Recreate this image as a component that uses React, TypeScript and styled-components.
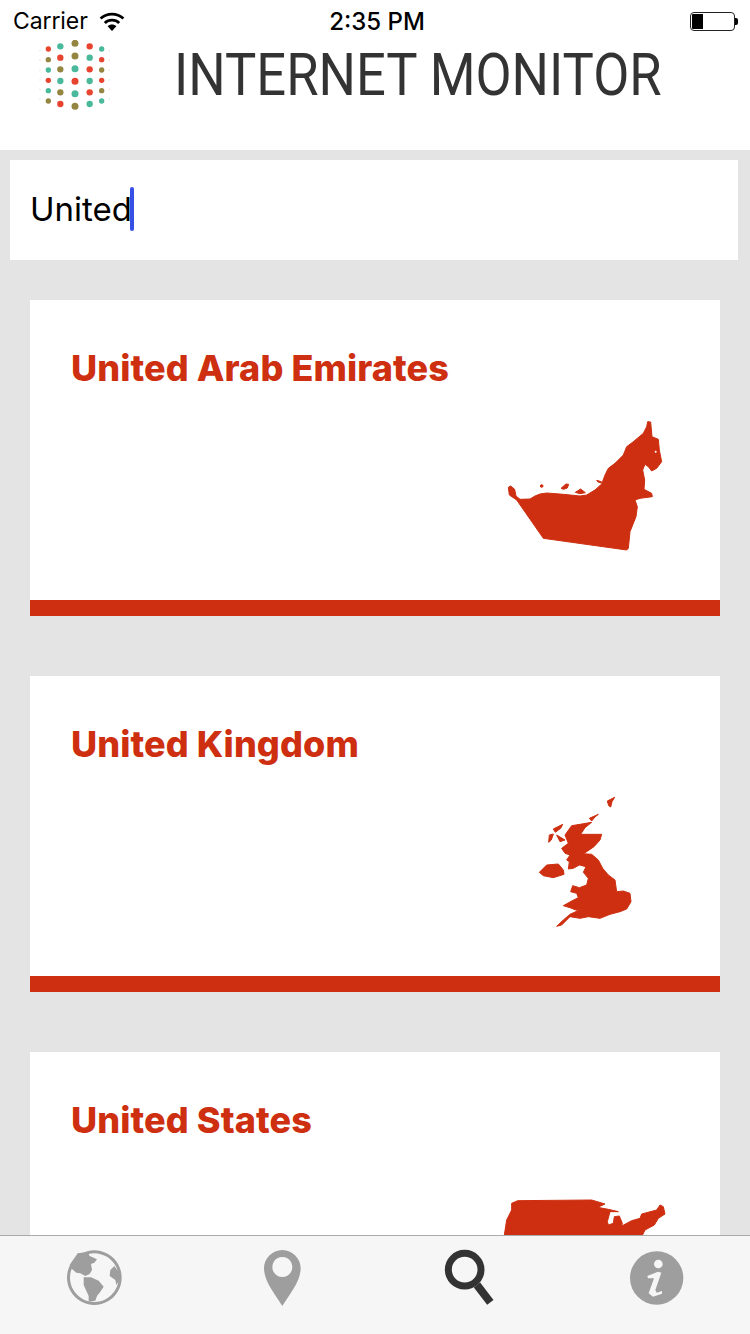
import React from "react";
import styled, { createGlobalStyle } from "styled-components";

const Global = createGlobalStyle`
  html, body { margin: 0; padding: 0; overflow: hidden; background: #e4e4e4; }
  * { box-sizing: border-box; }
`;

const Page = styled.div`
  width: 750px;
  height: 1334px;
  display: flex;
  flex-direction: column;
  background: #e4e4e4;
  font-family: Inter, "Liberation Sans", sans-serif;
  overflow: hidden;
`;
const StatusBar = styled.div`
  height: 40px;
  padding: 2px 12px 0 13px;
  background: #fff;
  display: grid;
  grid-template-columns: 1fr auto 1fr;
  align-items: center;
  color: #000;
  font-size: 23px;
`;
const Carrier = styled.div`
  display: flex;
  align-items: center;
  gap: 11px;
  letter-spacing: -0.1px;
`;
const Clock = styled.div`
  font-weight: 500;
  font-size: 24px;
  margin-left: 3px;
`;
const Battery = styled.div`
  justify-self: end;
  display: flex;
  align-items: center;
`;
const BatteryBody = styled.div`
  width: 45px;
  height: 19px;
  border: 1px solid #222;
  border-radius: 4px;
  padding: 1px;
  display: flex;
`;
const BatteryFill = styled.div`
  width: 11px;
  background: #000;
  border-radius: 1px 0 0 1px;
`;
const BatteryTip = styled.div`
  width: 3px;
  height: 7px;
  background: #000;
  border-radius: 0 2px 2px 0;
`;
const Header = styled.header`
  height: 110px;
  flex: none;
  padding-left: 30px;
  background: #fff;
  display: flex;
  align-items: flex-start;
  gap: 54px;
`;
const Logo = styled.svg`
  width: 90px;
  height: 80px;
  flex: none;
`;
const Title = styled.h1`
  margin: 0;
  font-family: Roboto, "Liberation Sans", sans-serif;
  font-weight: 400;
  font-size: 60px;
  line-height: 70px;
  color: #333;
  white-space: nowrap;
  transform: scaleX(0.875);
  transform-origin: 0 50%;
`;
const SearchBox = styled.div`
  flex: none;
  height: 100px;
  margin: 10px 12px 0 10px;
  padding: 0 0 2px 20px;
  background: #fff;
  display: flex;
  align-items: center;
  color: #000;
  font-size: 33px;
`;
const Caret = styled.span`
  width: 4px;
  height: 44px;
  margin-left: -2px;
  border-radius: 2px;
  background: #3650e6;
`;
const Results = styled.main`
  flex: 1;
  min-height: 0;
  overflow: hidden;
  padding: 40px 30px 0;
  display: flex;
  flex-direction: column;
  gap: 60px;
`;
const Card = styled.article`
  flex: none;
  height: 316px;
  background: #fff;
  border-bottom: 16px solid #cd2f10;
  display: flex;
  flex-direction: column;
  padding-left: 41px;
`;
const CardTitle = styled.h2`
  margin: 47px 0 0;
  height: 43px;
  font-size: 36px;
  letter-spacing: 0.1px;
  line-height: 43px;
  font-weight: 800;
  color: #cd2f10;
`;
const MapArt = styled.svg<{ $top: number; $right: number }>`
  flex: none;
  align-self: flex-end;
  margin-top: ${(p) => p.$top}px;
  margin-right: ${(p) => p.$right}px;
  fill: #cd2f10;
  stroke: #cd2f10;
  stroke-width: 3;
  stroke-linejoin: round;
  filter: blur(0.4px);
`;
const TabBar = styled.nav`
  flex: none;
  height: 99px;
  padding-top: 12px;
  background: #f6f6f6;
  border-top: 1px solid #ababab;
  display: grid;
  grid-template-columns: repeat(4, 1fr);
  justify-items: center;
  align-items: start;
`;
const TabIcon = styled.svg<{ $active?: boolean }>`
  width: 60px;
  height: 60px;
  fill: ${(p) => (p.$active ? "#333" : "#9e9e9e")};
  stroke: none;
`;

const R = "#e8432f";
const G = "#4ab89a";
const O = "#948540";
const logoColumns: { x: number; r: number; dots: [number, string][] }[] = [
  { x: 55, r: 8, dots: [[57, R], [89, O], [120, G], [151, R], [182, G], [213, O]] },
  { x: 91, r: 9.5, dots: [[49, G], [83, R], [118, O], [153, G], [187, O], [222, R]] },
  { x: 135, r: 10.5, dots: [[40, O], [78, O], [116, G], [154, R], [191, G], [229, O]] },
  { x: 179, r: 9.5, dots: [[49, R], [83, G], [118, R], [153, G], [187, R], [222, G]] },
  { x: 215, r: 8, dots: [[57, G], [89, R], [120, O], [151, R], [182, O], [213, G]] },
];
const edgeDots: [number, string][] = [
  [62, G], [91, R], [121, O], [150, G], [178, R], [207, G],
];

const LogoMark = () => (
  <Logo viewBox="0 30 270 240">
    {logoColumns.map((c) =>
      c.dots.map(([y, color]) => (
        <circle key={`${c.x}-${y}`} cx={c.x} cy={y} r={c.r} fill={color} />
      ))
    )}
    {edgeDots.map(([y, color]) => (
      <React.Fragment key={y}>
        <circle cx={30} cy={y} r={2} fill={color} opacity={0.3} />
        <circle cx={238} cy={y} r={2} fill={color} opacity={0.3} />
      </React.Fragment>
    ))}
  </Logo>
);

const Wifi = () => (
  <svg width="26" height="19" viewBox="0 0 26 19">
    <path d="M13 19 L8.6 14.2 C11 12 15 12 17.4 14.2Z" fill="#000" />
    <path d="M5.8 11 C9.7 7.2 16.3 7.2 20.2 11" fill="none" stroke="#000" strokeWidth="2.8" />
    <path d="M1.6 6.6 C8 0.6 18 0.6 24.4 6.6" fill="none" stroke="#000" strokeWidth="2.8" />
  </svg>
);

const UaeMap = () => (
  <MapArt $top={10} $right={40} width={200} height={160} viewBox="0 0 600 480">
    <path d="M85 262 L92 258 L104 268 L108 288 L120 298 L150 297 L165 288 L180 282 L200 279 L250 283 L300 288 L320 285 L345 270 L365 252 L375 225 L385 205 L405 190 L430 165 L440 140 L460 125 L490 100 L500 80 L503 65 L512 66 L516 110 L535 118 L538 150 L545 185 L530 205 L515 213 L505 200 L495 193 L488 210 L494 240 L492 268 L515 280 L517 290 L480 295 L465 300 L472 320 L468 350 L450 395 L445 445 L440 450 L190 415 L110 300 L88 285Z" />
    <circle cx="185" cy="258" r="4" />
    <path d="M243 265 L258 252 L266 253 L262 264 L250 268Z" />
    <path d="M286 277 L302 267 L316 278 L300 281Z" />
    <path d="M350 241 L364 245 L364 249 L354 246Z" />
    <circle cx="527" cy="155" r="3" fill="#fff" stroke="none" />
  </MapArt>
);

const UkMap = () => (
  <MapArt $top={19} $right={70} width={130} height={150} viewBox="0 0 390 450">
    <path d="M135 150 L155 122 L180 118 L215 112 L195 128 L182 148 L245 148 L240 165 L222 185 L200 200 L190 206 L215 208 L235 225 L248 250 L265 270 L285 285 L290 320 L310 318 L330 325 L333 350 L320 372 L300 380 L270 388 L240 400 L205 395 L180 400 L150 395 L125 420 L110 424 L130 405 L150 388 L185 372 L170 376 L150 368 L130 362 L155 348 L175 338 L170 325 L152 320 L158 302 L178 308 L200 300 L205 280 L190 262 L198 245 L178 240 L160 250 L145 252 L148 230 L140 225 L150 210 L135 205 L125 190 L145 175Z" />
    <path d="M58 262 L80 240 L115 237 L130 255 L132 268 L100 278 L70 272Z" />
    <path d="M100 132 L128 118 L122 130 L106 142Z" />
    <path d="M88 150 L100 147 L94 165 L86 172Z" />
    <path d="M110 150 L135 165 L120 170Z" />
    <path d="M208 100 L235 88 L225 96 L215 108Z" />
    <path d="M262 48 L284 37 L276 50 L272 66 L266 62Z" />
  </MapArt>
);

const UsMap = () => (
  <MapArt $top={48} $right={0} width={345} height={144} viewBox="0 0 1035 432">
    <path d="M410 40 L428 32 L650 30 L690 42 L668 52 L700 58 L730 65 L705 65 L697 95 L700 105 L715 100 L718 80 L733 78 L742 100 L740 108 L770 92 L795 85 L800 72 L845 60 L855 45 L865 50 L870 72 L850 85 L838 105 L810 120 L800 140 L790 300 L400 300 L388 135 L395 90 L410 60Z" />
  </MapArt>
);

const GlobeIcon = () => (
  <TabIcon viewBox="191 174 180 180">
    <path
      fillRule="evenodd"
      d="M282 181 a82 82 0 1 0 0.01 0Z M282 190 a73 73 0 1 1 -0.01 0Z"
    />
    <path d="M232 190 L262 186 L268 198 L290 208 L282 218 L272 222 L275 240 L268 252 L255 258 L240 250 L228 248 L212 235 L208 225Z" />
    <path d="M250 262 L272 262 L295 272 L310 290 L300 305 L290 318 L285 332 L265 335 L265 318 L250 285Z" />
    <path d="M342 228 L358 250 L358 270 L348 285 L345 270 L328 258 L330 240Z" />
  </TabIcon>
);

const PinIcon = () => (
  <TabIcon viewBox="754 174 180 180">
    <path
      fillRule="evenodd"
      d="M848 180 c30 0 55 25 55 55 c0 40 -35 80 -55 113 c-20 -33 -55 -73 -55 -113 c0 -30 25 -55 55 -55Z M848 201 a30 30 0 1 0 0.01 0Z"
    />
  </TabIcon>
);

const SearchIcon = () => (
  <TabIcon $active viewBox="191 174 180 180">
    <circle cx="268" cy="239" r="49" fill="none" stroke="#333" strokeWidth="21" />
    <path d="M305 285 L345 337" fill="none" stroke="#333" strokeWidth="24" />
  </TabIcon>
);

const InfoIcon = () => (
  <TabIcon viewBox="754 174 180 180">
    <circle cx="846" cy="264" r="80" />
    <circle cx="851" cy="222" r="13" fill="#f6f6f6" />
    <path
      d="M818 258 L850 245 L860 248 L842 300 L846 308 L862 303 L862 311 L835 320 L822 310 L838 265 L820 265Z"
      fill="#f6f6f6"
    />
  </TabIcon>
);

export default function App() {
  return (
    <Page>
      <Global />
      <StatusBar>
        <Carrier>
          Carrier
          <Wifi />
        </Carrier>
        <Clock>2:35 PM</Clock>
        <Battery>
          <BatteryBody>
            <BatteryFill />
          </BatteryBody>
          <BatteryTip />
        </Battery>
      </StatusBar>
      <Header>
        <LogoMark />
        <Title>INTERNET MONITOR</Title>
      </Header>
      <SearchBox>
        United
        <Caret />
      </SearchBox>
      <Results>
        <Card>
          <CardTitle>United Arab Emirates</CardTitle>
          <UaeMap />
        </Card>
        <Card>
          <CardTitle>United Kingdom</CardTitle>
          <UkMap />
        </Card>
        <Card>
          <CardTitle>United States</CardTitle>
          <UsMap />
        </Card>
      </Results>
      <TabBar>
        <GlobeIcon />
        <PinIcon />
        <SearchIcon />
        <InfoIcon />
      </TabBar>
    </Page>
  );
}
